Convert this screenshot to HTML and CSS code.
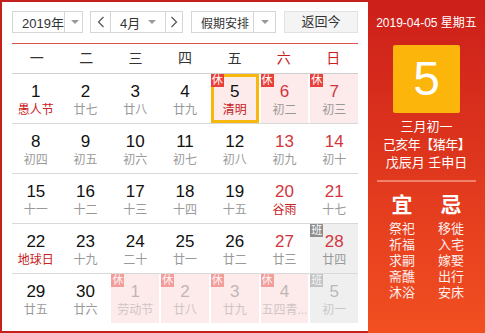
FILE: index.html
```html
<!DOCTYPE html>
<html lang="zh-CN">
<head>
  <meta charset="UTF-8">
  <title>万年历</title>
  <link rel="stylesheet" href="styles.css">
</head>
<body>

<div class="calendar">
  <div class="main">
    <div class="toolbar">
      <div class="select year">
        <span class="val">2019年</span>
        <span class="arrow"><i class="tri"></i></span>
      </div>
      <div class="select month">
        <span class="nav"><svg width="8" height="12" viewBox="0 0 8 12"><path d="M6.5 1 L1.5 6 L6.5 11" fill="none" stroke="#555" stroke-width="1.2"/></svg></span>
        <span class="val">4月</span>
        <span class="tri-wrap"><i class="tri"></i></span>
        <span class="nav next"><svg width="8" height="12" viewBox="0 0 8 12"><path d="M1.5 1 L6.5 6 L1.5 11" fill="none" stroke="#555" stroke-width="1.2"/></svg></span>
      </div>
      <div class="select holiday">
        <span class="val">假期安排</span>
        <span class="arrow"><i class="tri"></i></span>
      </div>
      <div class="btn-today">返回今</div>
    </div>

    <div class="weekdays">
      <span>一</span><span>二</span><span>三</span><span>四</span><span>五</span><span class="red">六</span><span class="red">日</span>
    </div>

    <div class="week">
      <div class="day"><b>1</b><em class="fest">愚人节</em></div>
      <div class="day"><b>2</b><em>廿七</em></div>
      <div class="day"><b>3</b><em>廿八</em></div>
      <div class="day"><b>4</b><em>廿九</em></div>
      <div class="day rest selected"><i class="badge">休</i><b>5</b><em class="fest">清明</em></div>
      <div class="day rest"><i class="badge">休</i><b class="red">6</b><em>初二</em></div>
      <div class="day rest"><i class="badge">休</i><b class="red">7</b><em>初三</em></div>
    </div>
    <div class="week">
      <div class="day"><b>8</b><em>初四</em></div>
      <div class="day"><b>9</b><em>初五</em></div>
      <div class="day"><b>10</b><em>初六</em></div>
      <div class="day"><b>11</b><em>初七</em></div>
      <div class="day"><b>12</b><em>初八</em></div>
      <div class="day"><b class="red">13</b><em>初九</em></div>
      <div class="day"><b class="red">14</b><em>初十</em></div>
    </div>
    <div class="week">
      <div class="day"><b>15</b><em>十一</em></div>
      <div class="day"><b>16</b><em>十二</em></div>
      <div class="day"><b>17</b><em>十三</em></div>
      <div class="day"><b>18</b><em>十四</em></div>
      <div class="day"><b>19</b><em>十五</em></div>
      <div class="day"><b class="red">20</b><em class="fest">谷雨</em></div>
      <div class="day"><b class="red">21</b><em>十七</em></div>
    </div>
    <div class="week">
      <div class="day"><b>22</b><em class="fest">地球日</em></div>
      <div class="day"><b>23</b><em>十九</em></div>
      <div class="day"><b>24</b><em>二十</em></div>
      <div class="day"><b>25</b><em>廿一</em></div>
      <div class="day"><b>26</b><em>廿二</em></div>
      <div class="day"><b class="red">27</b><em>廿三</em></div>
      <div class="day work"><i class="badge">班</i><b class="red">28</b><em>廿四</em></div>
    </div>
    <div class="week last">
      <div class="day"><b>29</b><em>廿五</em></div>
      <div class="day"><b>30</b><em>廿六</em></div>
      <div class="day rest other"><i class="badge">休</i><b>1</b><em>劳动节</em></div>
      <div class="day rest other"><i class="badge">休</i><b>2</b><em>廿八</em></div>
      <div class="day rest other"><i class="badge">休</i><b>3</b><em>廿九</em></div>
      <div class="day rest other"><i class="badge">休</i><b>4</b><em>五四青...</em></div>
      <div class="day work other"><i class="badge">班</i><b>5</b><em>初一</em></div>
    </div>
  </div>

  <div class="side">
    <div class="today-date">2019-04-05 星期五</div>
    <div class="big-day">5</div>
    <div class="lunar-info">
      <p>三月初一</p>
      <p>己亥年【猪年】</p>
      <p>戊辰月 壬申日</p>
    </div>
    <div class="yiji">
      <div class="col">
        <h3>宜</h3>
        <p>祭祀</p><p>祈福</p><p>求嗣</p><p>斋醮</p><p>沐浴</p>
      </div>
      <div class="col">
        <h3>忌</h3>
        <p>移徙</p><p>入宅</p><p>嫁娶</p><p>出行</p><p>安床</p>
      </div>
    </div>
  </div>
</div>

</body>
</html>
```

FILE: styles.css
```css
body {
  margin: 0;
  padding: 0;
  font-family: 'Liberation Sans', 'Noto Sans CJK SC', sans-serif;
  background-color: #fff;
}

.calendar {
  display: flex;
  width: 485px;
  height: 333px;
}

.main {
  width: 368px;
  box-sizing: border-box;
  border: 2px solid #c4201c;
  border-right: none;
  padding: 9px 10px 0 10px;
  background-color: #fff;
}

/* toolbar */
.toolbar {
  display: flex;
  height: 22px;
  font-size: 12px;
  color: #333;
}

.select {
  display: flex;
  align-items: center;
  height: 22px;
  box-sizing: border-box;
  border: 1px solid #d6d6d6;
  background-color: #fff;
  margin-right: 8px;
  white-space: nowrap;
}

.select .arrow {
  width: 21px;
  height: 100%;
  border-left: 1px solid #d6d6d6;
  display: flex;
  align-items: center;
  justify-content: center;
  flex-shrink: 0;
}

.tri {
  display: block;
  width: 0;
  height: 0;
  border-left: 4px solid transparent;
  border-right: 4px solid transparent;
  border-top: 4px solid #999;
}

.year {
  width: 71px;
  margin-right: 7px;
}

.year .val {
  flex: 1;
  padding-left: 9px;
  font-size: 13px;
}

.month {
  width: 93px;
}

.month .nav {
  width: 19px;
  height: 100%;
  display: flex;
  align-items: center;
  justify-content: center;
  border-right: 1px solid #d6d6d6;
}

.month .nav.next {
  width: 16px;
  border-right: none;
  border-left: 1px solid #d6d6d6;
}

.month .val {
  flex: 1;
  padding-left: 9px;
  font-size: 13px;
}

.month .tri-wrap {
  width: 17px;
}

.holiday {
  width: 85px;
}

.holiday .val {
  flex: 1;
  padding-left: 9px;
  font-size: 12px;
}

.btn-today {
  width: 74px;
  height: 22px;
  box-sizing: border-box;
  border: 1px solid #e2e2e2;
  background-color: #f4f4f4;
  text-align: center;
  line-height: 20px;
  font-size: 13px;
}

/* weekday header */
.weekdays {
  display: grid;
  grid-template-columns: repeat(7, 1fr);
  margin-top: 10px;
  border-top: 1px solid #d9534f;
  border-bottom: 1px solid #cfcfcf;
  height: 29px;
  line-height: 29px;
  font-size: 14px;
  color: #333;
  text-align: center;
}

.weekdays .red {
  color: #c8201c;
}

/* day grid */
.week {
  display: grid;
  grid-template-columns: repeat(7, 1fr);
  column-gap: 2px;
  height: 49px;
  border-bottom: 1px solid #d9d9d9;
}

.week.last {
  border-bottom: none;
}

.day {
  position: relative;
  text-align: center;
  padding-top: 8px;
  box-sizing: border-box;
  min-width: 0;
}

.day b {
  display: block;
  font-weight: normal;
  font-size: 17px;
  line-height: 20px;
  color: #111;
}

.day b.red {
  color: #d3353d;
}

.day em {
  display: block;
  font-style: normal;
  font-size: 12px;
  line-height: 16px;
  color: #999;
  white-space: nowrap;
  margin: 0 -4px;
}

.day em.fest {
  color: #c8201c;
}

.day.rest {
  background-color: #fdeaea;
}

.day.work {
  background-color: #efefef;
}

.day.selected {
  box-shadow: inset 0 0 0 3px #f6b80d;
}

.badge {
  position: absolute;
  left: 0;
  top: 0;
  width: 13px;
  height: 13px;
  line-height: 13px;
  font-size: 11px;
  font-style: normal;
  text-align: center;
  color: #fff;
  background-color: #e9413a;
}

.day.work .badge {
  background-color: #8e8e8e;
}

.day.other b,
.day.other em,
.day.other .badge {
  opacity: 0.45;
}

.day.other b {
  color: #777;
}

/* side panel */
.side {
  flex: 1;
  background: linear-gradient(#cc1f1a, #f24f21);
  color: #fff;
  text-align: center;
}

.today-date {
  margin-top: 15px;
  font-size: 12px;
  line-height: 16px;
}

.big-day {
  width: 67px;
  height: 68px;
  margin: 14px auto 0;
  background-color: #fbb50b;
  border-radius: 2px;
  font-size: 48px;
  line-height: 68px;
}

.lunar-info {
  margin-top: 5px;
  font-size: 13px;
  line-height: 18px;
}

.lunar-info p {
  margin: 0;
}

.lunar-info p:nth-child(2) {
  letter-spacing: -0.5px;
}

.yiji {
  display: flex;
  justify-content: center;
  margin: 8px 9px 0 9px;
  border-top: 2px solid #f0826c;
  padding-top: 11px;
}

.yiji .col {
  width: 49px;
}

.yiji h3 {
  margin: 0 0 4px;
  font-size: 21px;
  line-height: 24px;
  font-weight: bold;
}

.yiji p {
  margin: 0;
  font-size: 13px;
  line-height: 16px;
  color: #fdeeee;
}
```
